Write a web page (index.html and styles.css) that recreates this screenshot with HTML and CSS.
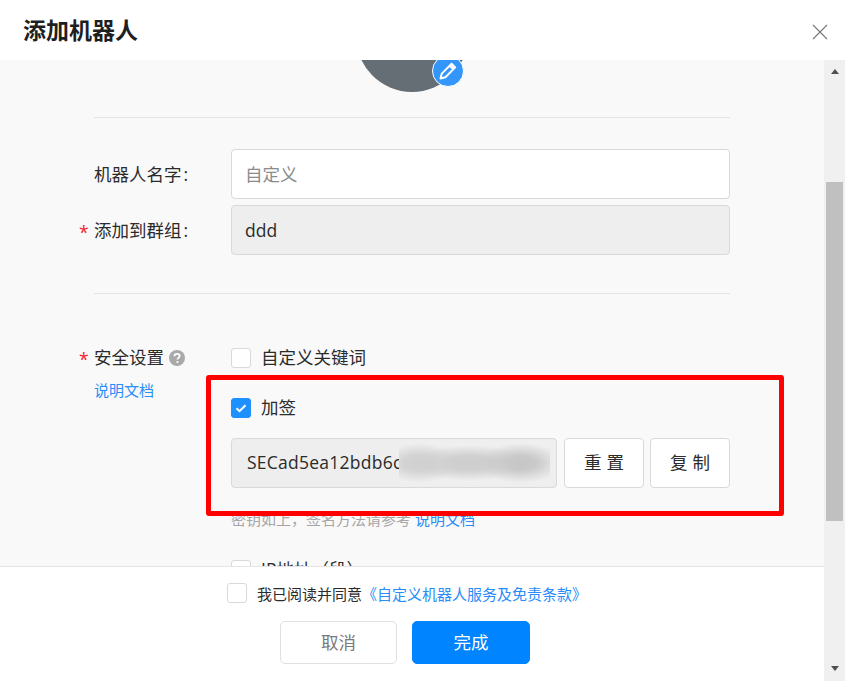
FILE: index.html
```html
<!DOCTYPE html>
<html lang="zh-CN">
<head>
<meta charset="utf-8">
<title>添加机器人</title>
<link rel="stylesheet" href="styles.css">
</head>
<body>
<div class="dialog">
  <header class="head">
    <h1 class="title">添加机器人</h1>
    <svg class="close" width="16" height="16" viewBox="0 0 16 16"><path d="M1 1L15 15M15 1L1 15" stroke="#7a7a7a" stroke-width="1.2" fill="none"/></svg>
  </header>
  <div class="main">
    <div class="left">
      <div class="content">
        <div class="avatar-wrap">
          <div class="avatar"></div>
          <div class="badge">
            <svg width="20" height="20" viewBox="0 0 20 20"><path d="M13.6 2.8l3.6 3.6-9.8 9.8-4.9 1.3 1.3-4.9z" fill="none" stroke="#fff" stroke-width="2" stroke-linejoin="round"/><path d="M11.6 4.8l3.6 3.6" stroke="#fff" stroke-width="2"/><path d="M13.6 2.8l3.6 3.6-2 2-3.6-3.6z" fill="#fff"/></svg>
          </div>
        </div>
        <div class="divider first"></div>
        <div class="row name-row">
          <label class="label">机器人名字<span class="colon">:</span></label>
          <div class="input placeholder">自定义</div>
        </div>
        <div class="row group-row">
          <label class="label req">添加到群组<span class="colon">:</span></label>
          <div class="input disabled">ddd</div>
        </div>
        <div class="divider second"></div>
        <div class="security">
          <div class="sec-label">
            <div class="label req sec-title"><span>安全设置</span>
              <svg class="help" width="16" height="16" viewBox="0 0 16 16"><circle cx="8" cy="8" r="8" fill="#a9a9a9"/><path d="M5.4 6.2c0-1.5 1.1-2.4 2.7-2.4s2.6.9 2.6 2.2c0 1.9-2.3 1.9-2.3 3.6" fill="none" stroke="#fff" stroke-width="1.8"/><circle cx="8.4" cy="12" r="1.1" fill="#fff"/></svg>
            </div>
            <a class="link doc">说明文档</a>
          </div>
          <div class="sec-opts">
            <div class="check-row"><span class="box"></span><span class="opt">自定义关键词</span></div>
            <div class="check-row sign"><span class="box on"><svg width="14" height="14" viewBox="0 0 14 14"><path d="M2.5 7.2l3 3 6-6" fill="none" stroke="#fff" stroke-width="2"/></svg></span><span class="opt">加签</span></div>
            <div class="secret-row">
              <div class="secret">SECad5ea12bdb6c<div class="blur"></div></div>
              <button class="btn">重置</button>
              <button class="btn">复制</button>
            </div>
            <div class="hint">密钥如上，签名方法请参考 <a class="link">说明文档</a></div>
            <div class="check-row ip"><span class="box"></span><span class="opt">IP地址（段）</span></div>
          </div>
        </div>
      </div>
      <footer class="foot">
        <div class="agree"><span class="box"></span><span class="agree-text">我已阅读并同意</span><a class="link">《自定义机器人服务及免责条款》</a></div>
        <div class="actions">
          <button class="action cancel">取消</button>
          <button class="action ok">完成</button>
        </div>
      </footer>
    </div>
    <div class="scrollbar">
      <span class="arrow up"></span>
      <span class="thumb"></span>
      <span class="arrow down"></span>
    </div>
  </div>
  <div class="mark"></div>
</div>
</body>
</html>
```
FILE: styles.css
```css
* { box-sizing: border-box; }
html, body { margin: 0; padding: 0; }
body {
  width: 845px; height: 681px; overflow: hidden; background: #fff; color: #2b2b2b;
  font-family: "Open Sans", "Noto Sans CJK SC", sans-serif; font-size: 17.5px;
}
.dialog { position: relative; width: 845px; height: 681px; display: flex; flex-direction: column; }
.head { height: 60px; flex: none; display: flex; align-items: center; justify-content: space-between; padding: 0 17px 0 23px; background: #fff; }
.title { margin: 0; font-size: 23px; font-weight: 700; color: #1f1f1f; line-height: 60px; }
.close { display: block; margin-top: 3px; }
.main { flex: 1; display: flex; min-height: 0; }
.left { flex: 1; display: flex; flex-direction: column; min-width: 0; }
.content { height: 506px; flex: none; overflow: hidden; background: #f9f9f9; padding: 0 94px; }
.avatar-wrap { position: relative; height: 32px; overflow: hidden; }
.avatar { position: absolute; left: 262px; bottom: 0; width: 112px; height: 112px; border-radius: 50%; background: #666e75; }
.badge { position: absolute; left: 338px; top: -5px; width: 32px; height: 32px; border-radius: 50%; background: #3296fa; border: 1px solid #fff; display: flex; align-items: center; justify-content: center; }
.divider { height: 1px; background: #e5e5e5; }
.divider.first { margin-top: 25px; }
.divider.second { margin-top: 38px; }
.row { display: flex; align-items: center; }
.name-row { margin-top: 31px; }
.group-row { margin-top: 6px; }
.label { width: 137px; flex: none; color: #2b2b2b; line-height: 24px; position: relative; }
.colon { margin-left: 2px; }
.req::before { content: "*"; position: absolute; left: -15px; top: 2px; color: #f5222d; font-size: 17.5px; }
.input { flex: 1; height: 50px; border: 1px solid #d9d9d9; border-radius: 4px; padding: 0 13px; line-height: 48px; background: #fff; }
.placeholder { color: #8c8c8c; }
.disabled { background: #eee; color: #2b2b2b; }
.security { display: flex; margin-top: 54px; }
.sec-label { width: 137px; flex: none; }
.sec-title { display: flex; align-items: center; gap: 5px; width: auto; margin-top: -3px; }
.help { display: block; margin-top: 1px; }
.doc { display: block; font-size: 15px; margin-top: 10px; line-height: 22px; }
.link { color: #2a8cf7; }
.sec-opts { flex: 1; min-width: 0; }
.check-row { display: flex; align-items: center; gap: 10px; height: 20px; }
.opt { margin-top: -3px; }
.box { width: 20px; height: 20px; flex: none; border: 1px solid #d9d9d9; border-radius: 3px; background: #fff; display: flex; align-items: center; justify-content: center; }
.box.on { background: #1e90ff; border-color: #1e90ff; }
.sign { margin-top: 30px; }
.secret-row { display: flex; margin-top: 20px; height: 50px; }
.secret { position: relative; width: 326px; border: 1px solid #d9d9d9; border-radius: 4px; background: #eee; padding-left: 15px; line-height: 46px; overflow: hidden; letter-spacing: .25px; }
.blur { position: absolute; left: 167px; top: 2px; width: 151px; height: 43px;
  background:
    radial-gradient(ellipse 42px 20px at 122px 22px, #c6c6c6 0%, #c9c9c9 35%, rgba(200,200,200,0) 100%),
    radial-gradient(ellipse 60px 18px at 70px 22px, #cecece 0%, #d0d0d0 40%, rgba(208,208,208,0) 100%),
    radial-gradient(ellipse 40px 20px at 20px 22px, #d0d0d0 0%, #d3d3d3 40%, rgba(210,210,210,0) 100%),
    #efefef; }
.btn { width: 80px; height: 50px; margin-left: 7px; border: 1px solid #d9d9d9; border-radius: 4px; background: #fff; color: #2b2b2b; font: inherit; letter-spacing: 5px; padding: 0 0 3px 5px; }
.btn + .btn { margin-left: 6px; }
.hint { font-size: 15px; color: #a6a6a6; margin-top: 20px; line-height: 22px; }
.ip { margin-top: 30px; }
.foot { flex: 1; border-top: 1px solid #e5e5e5; background: #fff; }
.agree { display: flex; align-items: center; margin: 16px 0 0 227px; height: 20px; font-size: 15px; }
.agree-text { margin-left: 10px; color: #2b2b2b; }
.actions { display: flex; gap: 15px; margin: 18px 0 0 280px; }
.action { width: 117px; height: 43px; border-radius: 5px; font: inherit; padding: 0 0 3px; }
.cancel { background: #fff; border: 1px solid #e0e0e0; color: #7a7a7a; }
.ok { width: 118px; background: #0084ff; border: 1px solid #0084ff; color: #fff; }
.scrollbar { width: 21px; flex: none; background: #f0f0f0; display: flex; flex-direction: column; align-items: center; }
.arrow { width: 0; height: 0; border-left: 4.5px solid transparent; border-right: 4.5px solid transparent; }
.up { margin-top: 9px; border-bottom: 5px solid #505050; }
.down { margin-top: 145px; border-top: 5px solid #505050; }
.thumb { width: 17px; height: 339px; margin-top: 108px; background: #c0c0c0; }
.mark { position: absolute; left: 206px; top: 375px; width: 578px; height: 141px; border: 5px solid #f00; border-radius: 3px; pointer-events: none; }
```
